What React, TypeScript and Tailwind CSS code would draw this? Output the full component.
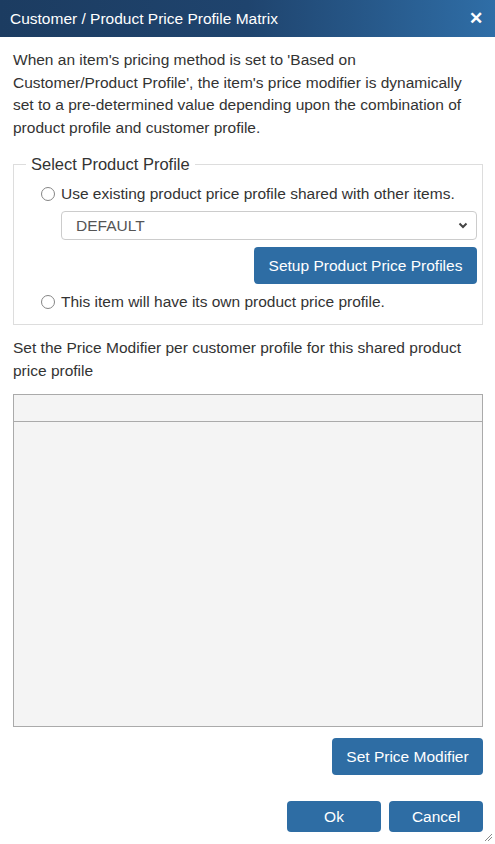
import React from "react";

const font = { fontFamily: '"Liberation Sans", Arial, sans-serif' };

function Radio() {
  return (
    <span className="inline-block w-[14px] h-[14px] rounded-full border border-[#858585] bg-white shrink-0" />
  );
}

export default function App() {
  return (
    <div className="w-[495px] h-[844px] bg-white relative overflow-hidden text-[#333]" style={font}>
      <div className="h-[37px] flex items-center justify-between pl-[10px] pr-[12px] bg-gradient-to-r from-[#1c3c61] via-[#1f446e] to-[#2f6ea7]">
        <span className="text-white text-[15.5px]">Customer / Product Price Profile Matrix</span>
        <span className="text-white text-[17px] font-bold leading-none">✕</span>
      </div>
      <div className="pl-[13px] pr-[12px] pt-[12px]">
        <p className="text-[15.5px] leading-[22.5px]">
          When an item's pricing method is set to 'Based on Customer/Product Profile', the item's price modifier is dynamically set to a pre-determined value depending upon the combination of product profile and customer profile.
        </p>
        <fieldset className="mt-[15px] border border-[#ddd] pl-[27px] pr-[5px] pb-[12px] pt-[10px]">
          <legend className="ml-[-15px] px-[5px] text-[16.5px] leading-[20px]">Select Product Profile</legend>
          <label className="flex items-center gap-[6px] text-[15.5px] leading-[20px]">
            <Radio />
            <span>Use existing product price profile shared with other items.</span>
          </label>
          <div className="ml-[20px] mt-[7px] h-[29px] border border-[#ccc] rounded-[4px] flex items-center justify-between pl-[14px] pr-[8px] text-[15.5px] text-[#555]">
            <span>DEFAULT</span>
            <svg width="10" height="7" viewBox="0 0 10 7">
              <path d="M1.5 1.5 L5 5 L8.5 1.5" fill="none" stroke="#444" strokeWidth="2" />
            </svg>
          </div>
          <div className="flex justify-end mt-[7px]">
            <button className="h-[37px] w-[223px] bg-[#2e6da4] rounded-[4px] text-white text-[15.5px]">
              Setup Product Price Profiles
            </button>
          </div>
          <label className="flex items-center gap-[6px] text-[15.5px] leading-[20px] mt-[8px]">
            <Radio />
            <span>This item will have its own product price profile.</span>
          </label>
        </fieldset>
        <p className="mt-[12px] text-[15.5px] leading-[22.5px]">
          Set the Price Modifier per customer profile for this shared product price profile
        </p>
        <div className="mt-[12px] h-[333px] border border-[#aaa] bg-[#f4f4f4] flex flex-col">
          <div className="h-[27px] border-b border-[#aaa]" />
        </div>
        <div className="flex justify-end mt-[11px]">
          <button className="h-[37px] w-[151px] bg-[#2e6da4] rounded-[4px] text-white text-[15.5px]">
            Set Price Modifier
          </button>
        </div>
        <div className="flex justify-end gap-[8px] mt-[26px]">
          <button className="h-[31px] w-[94px] bg-[#2e6da4] rounded-[4px] text-white text-[15.5px]">Ok</button>
          <button className="h-[31px] w-[94px] bg-[#2e6da4] rounded-[4px] text-white text-[15.5px]">Cancel</button>
        </div>
      </div>
      <svg className="absolute right-[2px] bottom-[2px]" width="10" height="10" viewBox="0 0 10 10">
        <path d="M2 9 L9 2 M5 9 L9 5" stroke="#888" strokeWidth="1" />
      </svg>
    </div>
  );
}
